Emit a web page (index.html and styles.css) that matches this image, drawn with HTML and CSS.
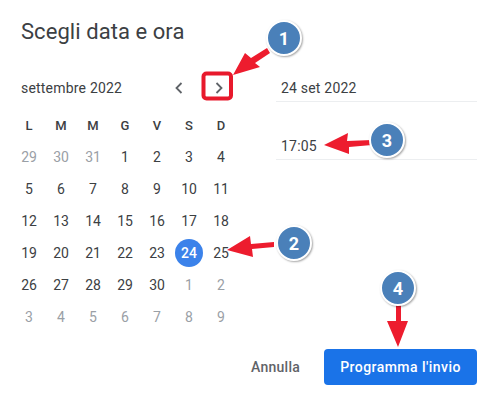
FILE: index.html
```html
<!DOCTYPE html>
<html lang="it">
<head>
<meta charset="utf-8">
<title>Scegli data e ora</title>
<link rel="stylesheet" href="styles.css">
</head>
<body>
<main class="dialog">
  <h1 class="title">Scegli data e ora</h1>
  <div class="content">
    <section class="calendar">
      <div class="month-bar">
        <span class="month">settembre 2022</span>
        <div class="nav">
          <svg class="chev" viewBox="0 0 32 28"><path d="M18.5 9 13.5 14 18.5 19"/></svg>
          <svg class="chev" viewBox="0 0 32 28"><path d="M13.5 9 18.5 14 13.5 19"/></svg>
        </div>
      </div>
      <div class="grid">
        <span class="head">L</span><span class="head">M</span><span class="head">M</span><span class="head">G</span><span class="head">V</span><span class="head">S</span><span class="head">D</span>
        <span class="off">29</span><span class="off">30</span><span class="off">31</span><span>1</span><span>2</span><span>3</span><span>4</span>
        <span>5</span><span>6</span><span>7</span><span>8</span><span>9</span><span>10</span><span>11</span>
        <span>12</span><span>13</span><span>14</span><span>15</span><span>16</span><span>17</span><span>18</span>
        <span>19</span><span>20</span><span>21</span><span>22</span><span>23</span><span class="selected">24</span><span>25</span>
        <span>26</span><span>27</span><span>28</span><span>29</span><span>30</span><span class="off">1</span><span class="off">2</span>
        <span class="off">3</span><span class="off">4</span><span class="off">5</span><span class="off">6</span><span class="off">7</span><span class="off">8</span><span class="off">9</span>
      </div>
    </section>
    <section class="fields">
      <div class="field">24 set 2022</div>
      <div class="field">17:05</div>
    </section>
  </div>
  <div class="actions">
    <span class="cancel">Annulla</span>
    <span class="primary">Programma l'invio</span>
  </div>
</main>

<svg class="marks" viewBox="0 0 494 400" aria-hidden="true">
  <rect class="box" x="203.5" y="73.5" width="27.5" height="25" rx="3"/>
  <path class="arrow" d="M267 48 251 58 245 53 233 75 260 67 255 63 270 53Z"/>
  <path class="arrow" d="M372 140 347 141 348 133 324 145 349 154 349 147 372 145Z"/>
  <path class="arrow" d="M274 242 251 244 250 236 227 250 253 257 252 249 274 247Z"/>
  <path class="arrow" d="M396 305H401V321H408L398 347 387 321H396Z"/>
</svg>
<span class="badge b1">1</span>
<span class="badge b2">2</span>
<span class="badge b3">3</span>
<span class="badge b4">4</span>
</body>
</html>
```

FILE: styles.css
```css
* { box-sizing: border-box; }
html, body { margin: 0; }
body {
  position: relative;
  width: 494px;
  height: 400px;
  overflow: hidden;
  background: #fff;
  font-family: Roboto, "Liberation Sans", sans-serif;
  color: #3c4043;
}
.dialog {
  display: flex;
  flex-direction: column;
  height: 400px;
  padding: 19px 17px 15px 21px;
}
.title {
  margin: 0;
  font-size: 22px;
  line-height: 26px;
  font-weight: 400;
  letter-spacing: .06px;
  color: #3c4043;
}
.content {
  display: flex;
  margin-top: 29px;
  flex: 1;
}
.calendar { width: 255px; }
.month-bar {
  display: flex;
  align-items: center;
  justify-content: space-between;
  width: 214px;
  height: 28px;
}
.month { font-size: 14px; letter-spacing: .2px; color: #3c4043; }
.nav { display: flex; gap: 8px; }
.chev { width: 32px; height: 28px; display: block; }
.chev path { fill: none; stroke: #5f6368; stroke-width: 1.8; }
.grid {
  display: grid;
  grid-template-columns: repeat(7, 32px);
  grid-auto-rows: 32px;
  margin: 7px 0 0 -8px;
  font-size: 14px;
  color: #3c4043;
}
.grid span {
  display: flex;
  align-items: center;
  justify-content: center;
}
.grid .head { font-weight: 500; font-size: 13px; }
.grid .off { color: #9aa0a6; }
.grid .selected {
  background: #3b82ea;
  border-radius: 50%;
  color: #fff;
  font-weight: 500;
  width: 28px;
  height: 28px;
  margin: 2px;
}
.fields { width: 201px; }
.field {
  height: 28px;
  padding: 4px 0 0 5px;
  font-size: 14px;
  letter-spacing: .2px;
  line-height: 20px;
  border-bottom: 1px solid #eceef0;
  margin-bottom: 30px;
  color: #3c4043;
}
.actions {
  display: flex;
  align-items: center;
  justify-content: flex-end;
  gap: 24px;
}
.cancel { font-size: 14px; font-weight: 500; letter-spacing: .25px; color: #5f6368; }
.primary {
  display: flex;
  align-items: center;
  justify-content: center;
  width: 153px;
  height: 36px;
  border-radius: 4px;
  background: #1a73e8;
  color: #fff;
  font-size: 14px;
  font-weight: 500;
  letter-spacing: .45px;
}
.marks { position: absolute; left: 0; top: 0; width: 494px; height: 400px; }
.box { fill: none; stroke: #e8192c; stroke-width: 4; }
.arrow { fill: #ed1c2e; }
.badge {
  position: absolute;
  width: 36px;
  height: 36px;
  display: flex;
  align-items: center;
  justify-content: center;
  border-radius: 50%;
  background: #4a80b9;
  border: 2px solid #fff;
  box-shadow: 1px 1px 2px rgba(0,0,0,.35);
  color: #fff;
  font-size: 18px;
  font-weight: 700;
}
.b1 { left: 266px; top: 20px; }
.b2 { left: 276px; top: 225px; }
.b3 { left: 369px; top: 122px; }
.b4 { left: 380px; top: 270px; }
```
